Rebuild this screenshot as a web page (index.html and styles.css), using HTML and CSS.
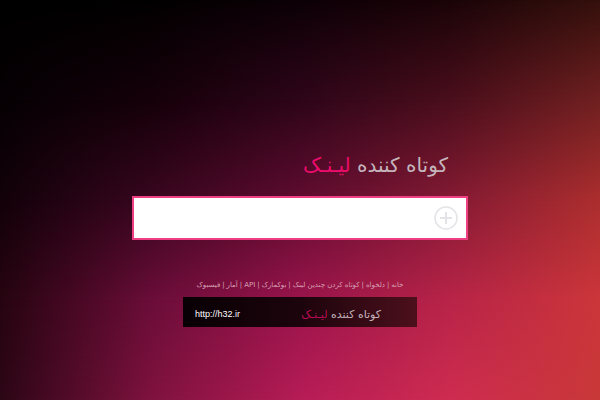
FILE: index.html
```html
<!DOCTYPE html>
<html lang="fa" dir="rtl">
<head>
  <meta charset="UTF-8" />
  <title>کوتاه کننده لینک</title>
  <link rel="stylesheet" href="styles.css">
</head>
<body>
  <div class="backdrop">
    <div class="band band-1"></div>
    <div class="band band-2"></div>
    <div class="band band-3"></div>
    <div class="band band-4"></div>
  </div>

  <main class="page">
    <h1 class="title">کوتاه کننده <span class="accent">لیـنـک</span></h1>

    <form class="shorten-form">
      <input type="text" class="url-input" name="url" aria-label="لینک" dir="ltr" />
      <button type="submit" class="add-btn" aria-label="کوتاه کن">
        <svg viewBox="0 0 24 24" width="24" height="24" fill="none" stroke="#e4e4e8">
          <circle cx="12" cy="12" r="11" stroke-width="1.5" />
          <path d="M12 6v12M6 12h12" stroke-width="2" />
        </svg>
      </button>
    </form>

    <nav class="menu">
      <a href="#">خانه</a><span>|</span>
      <a href="#">دلخواه</a><span>|</span>
      <a href="#">کوتاه کردن چندین لینک</a><span>|</span>
      <a href="#">بوکمارک</a><span>|</span>
      <a href="#">API</a><span>|</span>
      <a href="#">آمار</a><span>|</span>
      <a href="#">فیسبوک</a>
    </nav>

    <footer class="banner">
      <p class="banner-title">کوتاه کننده <span class="accent">لیـنـک</span></p>
      <a class="banner-link" href="http://h32.ir" dir="ltr">http://h32.ir</a>
    </footer>
  </main>
</body>
</html>
```
FILE: styles.css
```css
* {
  box-sizing: border-box;
}
body {
  margin: 0;
  min-height: 100vh;
  background: #000;
  color: #c4b4bc;
  font-family: "DejaVu Sans", sans-serif;
}

/* backdrop: one colour sweep per band, each fading in below the last */
.backdrop,
.band {
  position: absolute;
  inset: 0;
}
.backdrop {
  z-index: -1;
  background: linear-gradient(90deg, #000 0%, #020001 25%, #0c0006 50%, #1a0408 75%, #34100c 100%);
}
.band-1 {
  background: linear-gradient(90deg, #050003 0%, #150009 25%, #2e0519 50%, #4a0e1c 75%, #702020 100%);
  mask-image: linear-gradient(transparent 0%, #000 25%);
}
.band-2 {
  background: linear-gradient(90deg, #120109 0%, #38061f 25%, #600c30 50%, #841a34 75%, #ac2e2e 100%);
  mask-image: linear-gradient(transparent 25%, #000 50%);
}
.band-3 {
  background: linear-gradient(90deg, #260410 0%, #6a0d38 25%, #9a144c 50%, #b82448 75%, #cc363a 100%);
  mask-image: linear-gradient(transparent 50%, #000 75%);
}
.band-4 {
  background: linear-gradient(90deg, #2c0616 0%, #7e123e 25%, #b61c56 50%, #ce2c50 75%, #c83838 100%);
  mask-image: linear-gradient(transparent 75%, #000 100%);
}

.page {
  width: 56%;
  min-width: 334px;
  margin: 0 auto;
  padding-top: 150px;
  display: flex;
  flex-direction: column;
  align-items: center;
}
.accent {
  color: #ec0c6c;
}
.title {
  align-self: stretch;
  margin: 0 0 16px;
  padding: 0 20px;
  font-size: 20px;
  line-height: 30px;
  font-weight: normal;
}
.shorten-form {
  align-self: stretch;
  display: flex;
  align-items: center;
  height: 44px;
  padding: 0 8px;
  background: #fff;
  border: 2px solid #ee3f84;
}
.url-input {
  order: 2;
  flex: 1;
  min-width: 0;
  height: 36px;
  border: none;
  outline: none;
  background: transparent;
  font-size: 16px;
}
.add-btn {
  display: flex;
  padding: 0;
  border: none;
  background: none;
  cursor: pointer;
}
.menu {
  display: flex;
  gap: 2px;
  margin: 40px 0 6px;
  color: #d8a0b4;
  font-size: 7px;
  line-height: 11px;
  white-space: nowrap;
}
.menu a {
  color: inherit;
  text-decoration: none;
}
.banner {
  width: 234px;
  display: flex;
  align-items: center;
  justify-content: space-between;
  height: 30px;
  padding: 4px 36px 0 12px;
  background: linear-gradient(90deg, #080004 0%, #1c040c 50%, #4c101c 100%);
}
.banner-title {
  margin: 0;
  font-size: 11px;
}
.banner .accent {
  color: #b80c54;
}
.banner-link {
  color: #fff;
  font-family: "Liberation Sans", Arial, sans-serif;
  font-size: 9px;
  text-decoration: none;
}
```
